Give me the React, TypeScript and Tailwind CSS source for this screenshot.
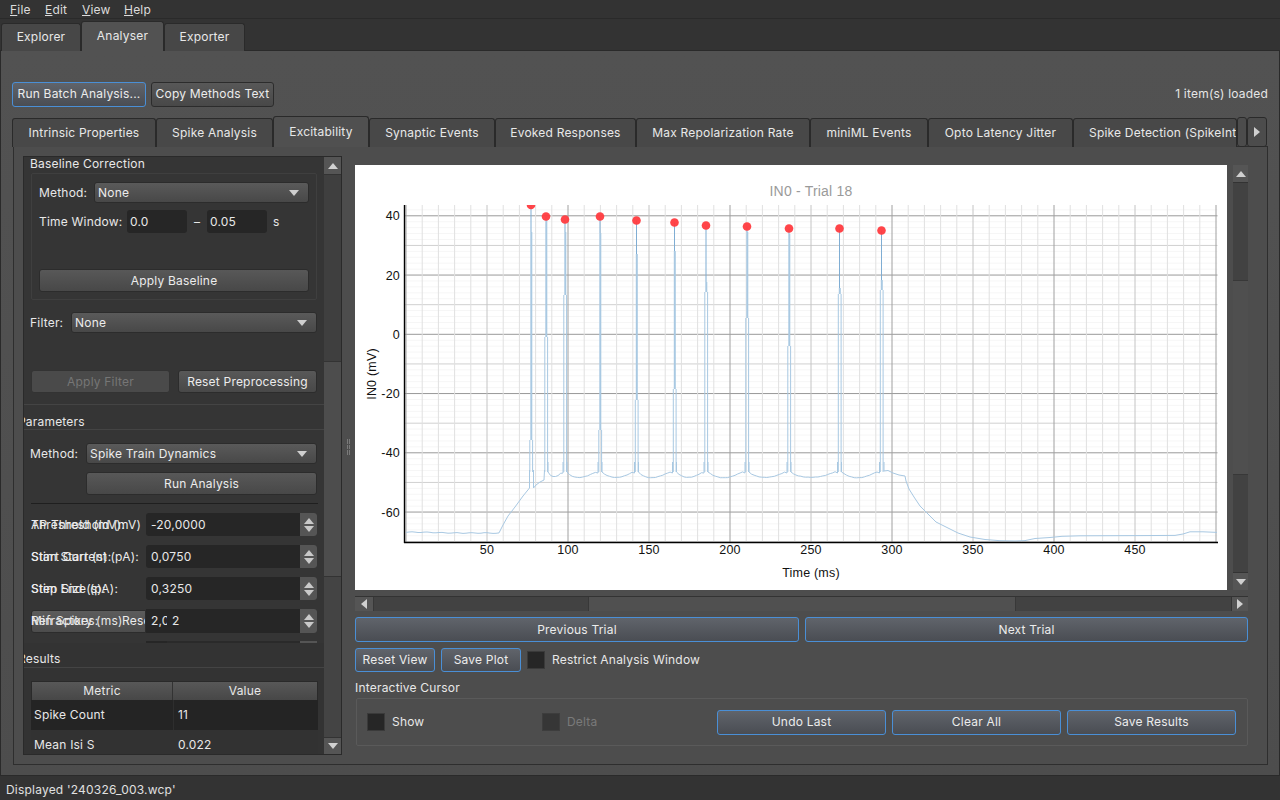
import React from "react";

const btn = "flex items-center justify-center rounded-[3px] border border-[#2c2c2c] bg-gradient-to-b from-[#585858] to-[#484848] text-[#ececec] whitespace-nowrap overflow-hidden";
const blue = "flex items-center justify-center rounded-[3px] border border-[#4a8fd6] bg-gradient-to-b from-[#60646b] to-[#4a4d53] text-[#ececec] whitespace-nowrap overflow-hidden";

function Caret({ dir, color = "#d0d0d0" }: { dir: "up" | "down" | "left" | "right"; color?: string }) {
  const pts = { up: "0,7 5,1 10,7", down: "0,1 5,7 10,1", left: "7,0 1,5 7,10", right: "1,0 7,5 1,10" }[dir];
  const box = dir === "up" || dir === "down" ? "0 0 10 8" : "0 0 8 10";
  const w = dir === "up" || dir === "down" ? 10 : 8;
  const h = dir === "up" || dir === "down" ? 8 : 10;
  return (
    <svg width={w} height={h} viewBox={box} className="block">
      <polygon points={pts} fill={color} />
    </svg>
  );
}

function Combo({ text, cls }: { text: string; cls: string }) {
  return (
    <div className={`flex h-[21px] items-center justify-between rounded-[3px] border border-[#2c2c2c] bg-gradient-to-b from-[#5a5a5a] to-[#484848] pl-[3px] pr-[9px] text-[#ececec] ${cls}`}>
      <span>{text}</span>
      <svg width="10" height="6" viewBox="0 0 10 6"><polygon points="0,0 10,0 5,6" fill="#cfcfcf" /></svg>
    </div>
  );
}

function SpinButtons() {
  return (
    <div className="flex h-full w-[17px] shrink-0 flex-col items-center justify-center gap-[2px] rounded-r-[3px] bg-[#555]">
      <svg width="10" height="6" viewBox="0 0 10 6"><polygon points="0,6 5,0 10,6" fill="#c9c9c9" /></svg>
      <svg width="10" height="6" viewBox="0 0 10 6"><polygon points="0,0 10,0 5,6" fill="#c9c9c9" /></svg>
    </div>
  );
}

function SpinRow({ labels, value, cls }: { labels: string[]; value: string; cls: string }) {
  return (
    <div className={`ml-[7px] grid h-[23px] w-[286px] grid-cols-[115px_171px] items-center ${cls}`}>
      {labels.map((l) => (
        <span key={l} className="col-start-1 row-start-1 whitespace-nowrap text-[#ececec]">{l}</span>
      ))}
      <div className="col-start-2 row-start-1 flex h-[23px] items-center justify-between rounded-[3px] bg-[#262626] pl-[5px]">
        <span className="text-[#e8e8e8]">{value}</span>
        <SpinButtons />
      </div>
    </div>
  );
}

function Check({ dim, label, cls }: { dim?: boolean; label: string; cls?: string }) {
  return (
    <div className={`flex items-center gap-[7px] ${cls ?? ""}`}>
      <div className={`h-[18px] w-[18px] border ${dim ? "border-[#3d3d3d] bg-[#363636]" : "border-[#3a3a3a] bg-[#262626]"}`} />
      <span className={dim ? "text-[#7a7a7a]" : "text-[#e8e8e8]"}>{label}</span>
    </div>
  );
}

const sx = (ms: number) => 406 + ms * 1.62;
const sy = (mv: number) => 334.3 - mv * 2.9625;

const spikes: [number, number, number, number][] = [
  [531, 205, 232, 440],
  [546, 216.5, 220, 337],
  [565, 219.5, 232, 295],
  [600, 216.5, 233, 430],
  [636.5, 220.5, 254, 400],
  [674.5, 222.5, 251, 389],
  [706, 225.5, 282, 292],
  [747, 226.5, 232, 318],
  [789, 228.5, 234, 346],
  [839.5, 228.5, 288, 294],
  [881.5, 230.5, 280, 290],
];

function noise(i: number) {
  return Math.sin(i * 12.9898) * 0.6 + Math.sin(i * 4.1) * 0.3;
}

function lowerTrace() {
  const p: [number, number][] = [];
  for (let x = 406; x <= 499; x += 3) p.push([x, 532.2 + (x - 406) * 0.012 + noise(x) * 0.6]);
  p.push([503, 525], [508, 516], [515, 507], [523, 496], [529.5, 488], [529.5, 470]);
  return p;
}

function gaps() {
  const segs: [number, number][][] = [];
  const first: [number, number][] = [[533.5, 470], [533.5, 488], [536, 485], [540, 482], [544, 480], [544.5, 470]];
  segs.push(first);
  for (let i = 1; i < spikes.length - 1; i++) {
    const a = spikes[i][0] + 2;
    const b = spikes[i + 1][0] - 2;
    const seg: [number, number][] = [[a, 462], [a, 472]];
    const n = Math.round((b - a) / 2.5);
    for (let k = 1; k < n; k++) {
      const t = k / n;
      const dip = i === 1 ? 5 : 6;
      const y = 472 + dip * Math.sin(Math.PI * Math.pow(t, 0.8)) - 1 * t + noise(a + k) * 0.5;
      seg.push([a + (b - a) * t, y]);
    }
    seg.push([b, 473], [b, 462]);
    segs.push(seg);
  }
  return segs;
}

const tail: [number, number][] = [
  [884, 462], [884, 471], [888, 470.5], [893, 473], [899, 475], [905, 476], [906, 481], [909, 489], [914, 497], [920, 506], [927, 513], [936, 522], [946, 527], [958, 533], [970, 537], [985, 539.5],
  [1000, 540.7], [1015, 541], [1025, 540.6], [1035, 538.5], [1050, 537.5], [1062, 536.3], [1080, 535.8], [1110, 535.7], [1140, 535.6], [1175, 535.4], [1183, 534], [1190, 531.8], [1203, 531.8], [1217, 532.4],
];

const pts = (a: [number, number][]) => a.map(([x, y]) => `${x.toFixed(1)},${y.toFixed(1)}`).join(" ");

function Chart() {
  const vminor: number[] = [];
  for (let m = 0; m <= 500; m += 10) vminor.push(m);
  const hfine: number[] = [];
  for (let v = -70; v <= 42; v += 2) hfine.push(v);
  return (
    <svg viewBox="355 165 872 425" className="block h-[425px] w-[872px]">
      <defs>
        <clipPath id="plot"><rect x="405" y="205" width="813" height="337" /></clipPath>
      </defs>
      <text x="811" y="196" textAnchor="middle" fontSize="14" fill="#9a9a9a" fontFamily="'Liberation Sans', sans-serif">IN0 - Trial 18</text>
      {hfine.map((v) => (
        <line key={v} x1="405" x2="1217.5" y1={sy(v)} y2={sy(v)} stroke={v % 20 === 0 ? "#999" : v % 10 === 0 ? "#d0d0d0" : "#f6f6f6"} strokeWidth="1" />
      ))}
      {vminor.map((m) => (
        <line key={m} x1={sx(m)} x2={sx(m)} y1="205" y2="542" stroke={m % 100 === 0 ? "#a0a0a0" : m % 50 === 0 ? "#c4c4c4" : "#e0e0e0"} strokeWidth="1" />
      ))}
      <g clipPath="url(#plot)">
        <polyline points={pts(lowerTrace())} fill="none" stroke="#a8c8e2" strokeWidth="1" />
        {gaps().map((s, i) => (
          <polyline key={i} points={pts(s)} fill="none" stroke="#a8c8e2" strokeWidth="1" />
        ))}
        <polyline points={pts(tail)} fill="none" stroke="#a8c8e2" strokeWidth="1" />
        {spikes.map(([x, top, thin, dbl], i) => (
          <g key={i}>
            <line x1={x} x2={x} y1={top} y2={thin} stroke="#7fadd3" strokeWidth="1" />
            <line x1={x + 0.3} x2={x + 0.3} y1={thin} y2={dbl} stroke="#a9c9e2" strokeWidth="2" />
            <line x1={x - 1.2} x2={x - 1.2} y1={dbl} y2="472" stroke="#a8c8e2" strokeWidth="1" />
            <line x1={x + 1.6} x2={x + 1.6} y1={dbl} y2="472" stroke="#a8c8e2" strokeWidth="1" />
          </g>
        ))}
        {spikes.map(([x, top], i) => (
          <circle key={i} cx={x} cy={top} r="4.3" fill="#ff3b3f" fillOpacity="0.95" />
        ))}
      </g>
      <line x1="404.5" x2="404.5" y1="205" y2="543" stroke="#000" strokeWidth="1.4" />
      <line x1="404" x2="1218" y1="542.5" y2="542.5" stroke="#000" strokeWidth="1.4" />
      <g fontFamily="'Liberation Sans', sans-serif" fontSize="12.5" fill="#111">
        {[40, 20, 0, -20, -40, -60].map((v) => (
          <text key={v} x="400" y={sy(v) + 4.5} textAnchor="end">{v}</text>
        ))}
        {[50, 100, 150, 200, 250, 300, 350, 400, 450].map((m) => (
          <text key={m} x={sx(m)} y="554" textAnchor="middle">{m}</text>
        ))}
        <text x="811" y="577" textAnchor="middle">Time (ms)</text>
        <text x="0" y="0" textAnchor="middle" transform="translate(376 374) rotate(-90)">IN0 (mV)</text>
      </g>
    </svg>
  );
}

const innerTabs: [string, string, boolean?][] = [
  ["Intrinsic Properties", "w-[144px]"],
  ["Spike Analysis", "w-[117px]"],
  ["Excitability", "w-[96px]", true],
  ["Synaptic Events", "w-[126px]"],
  ["Evoked Responses", "w-[141px]"],
  ["Max Repolarization Rate", "w-[174px]"],
  ["miniML Events", "w-[118px]"],
  ["Opto Latency Jitter", "w-[145px]"],
];

export default function App() {
  return (
    <div className="flex h-[800px] w-[1280px] flex-col overflow-hidden bg-[#333] text-[12px] leading-none tracking-[0.2px] text-[#e8e8e8] [font-family:'Inter','Liberation_Sans',sans-serif]">
      {/* menu */}
      <div className="flex h-[19px] items-center border-b border-[#2a2a2a] pl-[10px] pt-[1px] text-[#dcdcdc]">
        <span className="w-[35px]"><u>F</u>ile</span>
        <span className="w-[37px]"><u>E</u>dit</span>
        <span className="w-[42px]"><u>V</u>iew</span>
        <span><u>H</u>elp</span>
      </div>
      {/* outer tabs */}
      <div className="relative z-10 -mb-px flex h-[32px] items-end pl-[1px]">
        <div className="flex h-[28px] w-[80px] items-center justify-center rounded-t-[3px] border border-b-0 border-[#2a2a2a] bg-[#474747] pb-[1px]">Explorer</div>
        <div className="flex h-[30px] w-[83px] items-center justify-center rounded-t-[3px] border border-b-0 border-[#2a2a2a] bg-[#525252] pb-[1px]">Analyser</div>
        <div className="flex h-[28px] w-[81px] items-center justify-center rounded-t-[3px] border border-b-0 border-[#2a2a2a] bg-[#474747] pb-[1px]">Exporter</div>
      </div>
      {/* outer pane */}
      <div className="flex h-[726px] flex-col border border-[#2a2a2a] bg-gradient-to-b from-[#525252] to-[#4d4d4d] pl-[12px] pr-[11px]">
        <div className="-ml-px mt-[31px] flex h-[25px] items-center">
          <div className={`${blue} h-[25px] w-[134px] pb-[1px]`}>Run Batch Analysis...</div>
          <div className={`${btn} ml-[5px] h-[25px] w-[123px] pb-[1px]`}>Copy Methods Text</div>
          <span className="ml-auto pb-[1px] text-[#e6e6e6]">1 item(s) loaded</span>
        </div>
        {/* inner tabs */}
        <div className="relative z-10 -mb-px -ml-px mt-[9px] flex h-[31px] items-end">
          {innerTabs.map(([t, w, active]) => (
            <div
              key={t}
              className={
                active
                  ? `flex h-[31px] ${w} items-center justify-center rounded-t-[3px] border border-b-0 border-[#2a2a2a] bg-[#505050]`
                  : `flex h-[29px] ${w} items-center justify-center rounded-t-[3px] border border-b-0 border-[#2a2a2a] bg-[#484848]`
              }
            >
              {t}
            </div>
          ))}
          <div className="flex h-[29px] w-[164px] items-center overflow-hidden whitespace-nowrap rounded-t-[3px] border border-b-0 border-[#2a2a2a] bg-[#484848] pl-[15px]">Spike Detection (SpikeInt</div>
          <div className="h-[30px] w-[10px] rounded-[3px] border border-[#2a2a2a] bg-[#4c4c4c]" />
          <div className="flex h-[30px] w-[20px] items-center justify-center rounded-[3px] border border-[#2a2a2a] bg-[#4c4c4c]">
            <Caret dir="right" />
          </div>
        </div>
        {/* inner pane */}
        <div className="flex h-[619px] w-[1255px] border border-[#2e2e2e] bg-[#4d4d4d]">
          {/* left panel */}
          <div className="ml-[9px] mt-[9px] flex h-[599px] w-[319px] overflow-hidden border border-[#2a2a2a] bg-[#353535]">
            <div className="flex w-[301px] flex-col overflow-hidden">
              <div className="flex h-[248px] shrink-0 flex-col border-b border-[#444]">
                <div className="ml-[6px] h-[14px] leading-[14px]">Baseline Correction</div>
                <div className="ml-[7px] mt-[2px] h-[127px] w-[286px] rounded-[2px] border border-[#3f3f3f] pl-[7px] pt-[8px]">
                  <div className="flex items-center">
                    <span className="w-[55px]">Method:</span>
                    <Combo text="None" cls="w-[215px]" />
                  </div>
                  <div className="mt-[7px] flex h-[23px] items-center">
                    <span className="w-[88px] whitespace-nowrap">Time Window:</span>
                    <div className="flex h-[23px] w-[60px] items-center rounded-[3px] bg-[#262626] pl-[3px]">0.0</div>
                    <span className="w-[20px] text-center">–</span>
                    <div className="flex h-[23px] w-[60px] items-center rounded-[3px] bg-[#262626] pl-[3px]">0.05</div>
                    <span className="ml-[6px]">s</span>
                  </div>
                  <div className={`${btn} mt-[36px] h-[23px] w-[270px]`}>Apply Baseline</div>
                </div>
                <div className="ml-[6px] mt-[12px] flex items-center">
                  <span className="w-[41px]">Filter:</span>
                  <Combo text="None" cls="w-[246px]" />
                </div>
                <div className="ml-[7px] mt-[37px] flex gap-[8px]">
                  <div className="flex h-[23px] w-[139px] items-center justify-center rounded-[3px] border border-[#333] bg-[#4a4a4a] text-[#767676]">Apply Filter</div>
                  <div className={`${btn} h-[23px] w-[139px]`}>Reset Preprocessing</div>
                </div>
              </div>
              {/* parameters */}
              <div className="h-[239px] shrink-0 overflow-hidden border-b border-[#2d2d2d] bg-[#353535]">
                <div className="-ml-[6px] flex h-[25px] items-center border-b border-[#444] pt-[9px]">Parameters</div>
                <div className="ml-[6px] mt-[13px] flex items-center">
                  <span className="w-[56px]">Method:</span>
                  <Combo text="Spike Train Dynamics" cls="w-[231px]" />
                </div>
                <div className={`${btn} ml-[62px] mt-[8px] h-[23px] w-[231px]`}>Run Analysis</div>
                <div className="ml-[7px] mt-[8px] h-px w-[287px] bg-[#1f1f1f]" />
                <SpinRow labels={["AP Threshold (mV)", "Threshold (mV):"]} value="-20,0000" cls="mt-[9px]" />
                <SpinRow labels={["Stim Start (s):", "Start Current (pA):"]} value="0,0750" cls="mt-[9px]" />
                <SpinRow labels={["Stim End (s):", "Step Size (pA):"]} value="0,3250" cls="mt-[9px]" />
                {/* overlapped row */}
                <div className="ml-[7px] mt-[9px] grid h-[24px] w-[286px] grid-cols-[115px_21px_150px] items-center">
                  <div className="col-start-1 row-start-1 flex h-[23px] items-center justify-end overflow-hidden rounded-l-[3px] border border-[#2c2c2c] bg-gradient-to-b from-[#5c5c5c] to-[#4c4c4c]">
                    <span className="w-[23px] overflow-hidden text-[#ececec]">Reset</span>
                  </div>
                  <span className="col-start-1 row-start-1 whitespace-nowrap">Min Spikes:</span>
                  <span className="col-start-1 row-start-1 whitespace-nowrap">Refractory (ms)</span>
                  <div className="col-start-2 row-start-1 flex h-[24px] items-center overflow-hidden whitespace-nowrap bg-[#262626] pl-[5px]">2,0000</div>
                  <div className="col-start-3 row-start-1 flex h-[24px] items-center justify-between rounded-r-[3px] bg-[#262626] pl-[5px]">
                    2
                    <SpinButtons />
                  </div>
                </div>
                <div className="ml-[7px] mt-[8px] flex h-[8px] w-[286px]">
                  <div className="ml-[115px] h-[8px] w-[21px] bg-[#262626]" />
                  <div className="h-[8px] flex-1 bg-[#2a2a2a]" />
                  <div className="h-[8px] w-[17px] bg-[#555]" />
                </div>
              </div>
              {/* results */}
              <div className="-mt-px flex h-[111px] shrink-0 flex-col overflow-hidden bg-[#333]">
                <div className="-ml-[6px] flex h-[25px] shrink-0 items-center border-b border-[#444] pt-[7px]">Results</div>
                <div className="ml-[7px] mt-[13px] w-[287px] shrink-0">
                  <div className="flex h-[19px] border border-b-0 border-[#2a2a2a] bg-gradient-to-b from-[#585858] to-[#474747] text-[#e8e8e8]">
                    <div className="flex w-[141px] items-center justify-center border-r border-[#333]">Metric</div>
                    <div className="flex flex-1 items-center justify-center">Value</div>
                  </div>
                  <div className="flex h-[30px] items-center bg-[#242424]">
                    <span className="w-[142px] pl-[3px]">Spike Count</span>
                    <span className="border-l border-[#2e2e2e] pl-[4px] leading-[30px]">11</span>
                  </div>
                  <div className="flex h-[30px] items-center bg-[#323232]">
                    <span className="w-[143px] pl-[3px]">Mean Isi S</span>
                    <span className="pl-[4px]">0.022</span>
                  </div>
                </div>
              </div>
            </div>
            {/* left scrollbar */}
            <div className="flex w-[17px] flex-col bg-[#404040]">
              <div className="flex h-[18px] items-center justify-center border-b border-[#333] bg-[#555]"><Caret dir="up" /></div>
              <div className="h-[186px] bg-[#3f3f3f]" />
              <div className="h-[216px] border-y border-[#333] bg-[#4d4d4d]" />
              <div className="flex-1 bg-[#444]" />
              <div className="flex h-[17px] items-center justify-center border-t border-[#333] bg-[#555]"><Caret dir="down" /></div>
            </div>
          </div>
          {/* splitter */}
          <div className="flex w-[13px] flex-col items-center pt-[292px]">
            <div className="grid h-[16px] w-[3px] grid-cols-2 gap-[1px] opacity-60">
              <i className="bg-[#999]" /><i className="bg-[#999]" /><i className="bg-[#999]" /><i className="bg-[#999]" /><i className="bg-[#999]" /><i className="bg-[#999]" />
            </div>
          </div>
          {/* right column */}
          <div className="mt-[18px] flex w-[893px] flex-col">
            <div className="flex h-[425px]">
              <div className="h-[425px] w-[872px] bg-white"><Chart /></div>
              <div className="ml-[6px] flex w-[15px] flex-col bg-[#444]">
                <div className="flex h-[18px] items-center justify-center border-b border-[#333] bg-[#555]"><Caret dir="up" /></div>
                <div className="h-[97px] bg-[#424242]" />
                <div className="h-[195px] border-y border-[#383838] bg-[#4f4f4f]" />
                <div className="flex-1 bg-[#424242]" />
                <div className="flex h-[18px] items-center justify-center border-t border-[#333] bg-[#555]"><Caret dir="down" /></div>
              </div>
            </div>
            <div className="mt-[6px] flex h-[15px] border-t border-[#333] bg-[#444]">
              <div className="flex w-[18px] items-center justify-center bg-[#555]"><Caret dir="left" /></div>
              <div className="w-[215px] border-l border-[#383838] bg-[#424242]" />
              <div className="w-[428px] border-x border-[#383838] bg-[#505050]" />
              <div className="flex-1 bg-[#424242]" />
              <div className="flex w-[17px] items-center justify-center border-l border-[#333] bg-[#555]"><Caret dir="right" /></div>
            </div>
            <div className="mt-[6px] flex h-[25px] gap-[6px]">
              <div className={`${blue} w-[444px]`}>Previous Trial</div>
              <div className={`${blue} w-[443px]`}>Next Trial</div>
            </div>
            <div className="mt-[6px] flex h-[24px] items-center">
              <div className={`${blue} h-[24px] w-[80px]`}>Reset View</div>
              <div className={`${blue} ml-[6px] h-[24px] w-[80px]`}>Save Plot</div>
              <Check label="Restrict Analysis Window" cls="ml-[6px]" />
            </div>
            <div className="mt-[10px] h-[12px] leading-[12px]">Interactive Cursor</div>
            <div className="ml-[1px] mt-[4px] flex h-[48px] w-[892px] items-center rounded-[2px] border border-[#5a5a5a] pl-[10px]">
              <Check label="Show" cls="w-[175px]" />
              <Check dim label="Delta" cls="w-[175px]" />
              <div className={`${blue} h-[25px] w-[169px]`}>Undo Last</div>
              <div className={`${blue} ml-[6px] h-[25px] w-[169px]`}>Clear All</div>
              <div className={`${blue} ml-[6px] h-[25px] w-[169px]`}>Save Results</div>
            </div>
          </div>
        </div>
      </div>
      {/* status */}
      <div className="flex h-[24px] items-center pl-[6px] pt-[4px] text-[#e0e0e0]">Displayed '240326_003.wcp'</div>
    </div>
  );
}
